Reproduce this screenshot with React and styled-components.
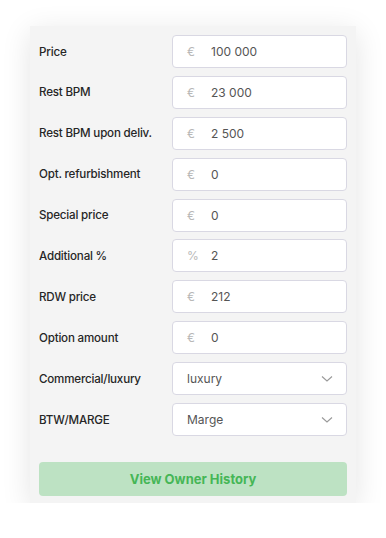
import React from "react";
import styled, { createGlobalStyle } from "styled-components";

const Global = createGlobalStyle`
  html, body { margin: 0; padding: 0; background: #fff; }
  body { font-family: Inter, "Open Sans", sans-serif; }
`

const Page = styled.div`
  padding: 26px 30px 0 30px;
`

const Card = styled.div`
  width: 326px;
  box-sizing: border-box;
  background: #f4f4f4;
  padding: 9px 9px 7px 9px;
  box-shadow: 0 6px 28px rgba(0, 0, 0, 0.11);
  display: flex;
  flex-direction: column;
`

const Row = styled.div`
  display: grid;
  grid-template-columns: 133px 1fr;
  align-items: center;
  height: 33px;
  margin-bottom: 7.9px;
`

const Label = styled.div`
  font-size: 11.6px;
  font-weight: 500;
  color: #262626;
  letter-spacing: -0.2px;
`

const Field = styled.div`
  height: 33px;
  box-sizing: border-box;
  background: #fff;
  border: 1px solid #d9d8e3;
  border-radius: 4px;
  display: flex;
  align-items: center;
  padding: 0 14px;
  font-size: 12px;
  color: #555;
`

const Unit = styled.span`
  width: 24px;
  color: #b8b8b8;
  font-size: 12px;
`

const Value = styled.span`
  flex: 1;
`

const Chevron = styled.svg`
  width: 12px;
  height: 8px;
  margin-right: -1px;
`

const Button = styled.button`
  margin-top: 18px;
  height: 34px;
  border: none;
  border-radius: 4px;
  background: #bde2c3;
  color: #45b656;
  font-family: inherit;
  font-size: 13px;
  font-weight: 700;
  cursor: pointer;
`

const rows = [
  { label: "Price", unit: "€", value: "100 000" },
  { label: "Rest BPM", unit: "€", value: "23 000" },
  { label: "Rest BPM upon deliv.", unit: "€", value: "2 500" },
  { label: "Opt. refurbishment", unit: "€", value: "0" },
  { label: "Special price", unit: "€", value: "0" },
  { label: "Additional %", unit: "%", value: "2" },
  { label: "RDW price", unit: "€", value: "212" },
  { label: "Option amount", unit: "€", value: "0" },
]

const selects = [
  { label: "Commercial/luxury", value: "luxury" },
  { label: "BTW/MARGE", value: "Marge" },
]

export default function App() {
  return (
    <Page>
      <Global />
      <Card>
        {rows.map((r) => (
          <Row key={r.label}>
            <Label>{r.label}</Label>
            <Field>
              <Unit>{r.unit}</Unit>
              <Value>{r.value}</Value>
            </Field>
          </Row>
        ))}
        {selects.map((s) => (
          <Row key={s.label}>
            <Label>{s.label}</Label>
            <Field>
              <Value>{s.value}</Value>
              <Chevron viewBox="0 0 12 8">
                <path d="M1 1.5 L6 6 L11 1.5" fill="none" stroke="#999" strokeWidth="1.1" />
              </Chevron>
            </Field>
          </Row>
        ))}
        <Button>View Owner History</Button>
      </Card>
    </Page>
  )
}
